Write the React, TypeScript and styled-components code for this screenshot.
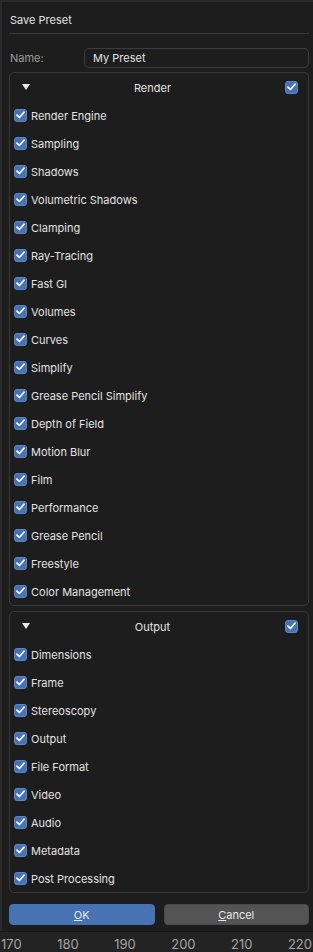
import React from "react"
import styled, { createGlobalStyle } from "styled-components"

const GlobalStyle = createGlobalStyle`
html, body {
  margin: 0;
  padding: 0;
  background: #2a2a2a;
  font-family: Inter, "Noto Sans", "DejaVu Sans", sans-serif;
  overflow: hidden;
}
`

const Page = styled.div`
display: flex;
flex-direction: column;
width: 313px;
height: 952px;
`

const Dialog = styled.div`
margin: 2px 0 0 2px;
height: 929px;
box-sizing: border-box;
background: #1d1d1d;
display: flex;
flex-direction: column;
padding: 0 4px 0 7px;
`

const Title = styled.div`
height: 32px;
box-sizing: border-box;
padding: 4px 0 0 1px;
display: flex;
align-items: center;
font-size: 11px;
color: #e2e2e2;
border-bottom: 1px solid #3a3a3a;
`

const NameRow = styled.div`
display: flex;
align-items: center;
margin-top: 14px;
height: 20px;
`

const NameLabel = styled.span`
width: 74px;
padding-left: 1px;
font-size: 11px;
color: #9c9c9c;
`

const NameInput = styled.div`
flex: 1;
height: 20px;
box-sizing: border-box;
border: 1px solid #3c3c3c;
border-radius: 5px;
background: #1d1d1d;
color: #e2e2e2;
font-size: 11px;
display: flex;
align-items: center;
padding-left: 8px;
`

const Panel = styled.div<{ $gap: number }>`
margin-top: ${(p) => p.$gap}px;
border: 1px solid #383838;
border-radius: 5px;
display: flex;
flex-direction: column;
padding: 0 4px;
`

const PanelHeader = styled.div`
height: 28px;
display: flex;
align-items: center;
`

const Triangle = styled.div`
width: 0;
height: 0;
border-left: 4px solid transparent;
border-right: 4px solid transparent;
border-top: 6px solid #e6e6e6;
margin-left: 8px;
`

const PanelTitle = styled.span`
flex: 1;
text-align: center;
font-size: 11px;
color: #e2e2e2;
margin-right: 10px;
padding-top: 2px;
`

const HeaderCheck = styled.div`
margin-right: 6px;
`

const Row = styled.div`
height: 28px;
display: flex;
align-items: center;
gap: 4px;
font-size: 11px;
color: #e2e2e2;
`

const Label = styled.span`
padding-top: 2px;
`

const Box = styled.div`
width: 13px;
height: 13px;
box-sizing: border-box;
border-radius: 3px;
background: #4772b3;
border: 1px solid #5b85c4;
display: flex;
align-items: center;
justify-content: center;
`

const Buttons = styled.div`
display: flex;
gap: 9px;
margin-top: 11px;
`

const Button = styled.div<{ $primary?: boolean }>`
flex: 1;
height: 19px;
border-radius: 4px;
background: ${(p) => (p.$primary ? "#4772b3" : "#545454")};
border: 1px solid ${(p) => (p.$primary ? "#4772b3" : "#4a4a4a")};
color: #e8e8e8;
font-size: 11px;
display: flex;
align-items: center;
justify-content: center;
`

const Ruler = styled.div`
flex: 1;
background: #232323;
border-top: 1px solid #181818;
display: flex;
align-items: center;
justify-content: space-between;
padding: 3px 1px 0 1px;
color: #a4a4a4;
font-size: 13px;
`

const Check = () => (
  <Box>
    <svg width="9" height="8" viewBox="0 0 9 8">
      <path d="M1 4.2 L3.4 6.5 L8 1.2" fill="none" stroke="#fff" strokeWidth="1.7" strokeLinecap="round" strokeLinejoin="round" />
    </svg>
  </Box>
)

const renderItems = [
  "Render Engine", "Sampling", "Shadows", "Volumetric Shadows", "Clamping",
  "Ray-Tracing", "Fast GI", "Volumes", "Curves", "Simplify",
  "Grease Pencil Simplify", "Depth of Field", "Motion Blur", "Film",
  "Performance", "Grease Pencil", "Freestyle", "Color Management",
]

const outputItems = [
  "Dimensions", "Frame", "Stereoscopy", "Output", "File Format",
  "Video", "Audio", "Metadata", "Post Processing",
]

const Section = ({ title, items, gap }: { title: string; items: string[]; gap: number }) => (
  <Panel $gap={gap}>
    <PanelHeader>
      <Triangle />
      <PanelTitle>{title}</PanelTitle>
      <HeaderCheck><Check /></HeaderCheck>
    </PanelHeader>
    {items.map((it) => (
      <Row key={it}>
        <Check />
        <Label>{it}</Label>
      </Row>
    ))}
  </Panel>
)

export default function App() {
  return (
    <>
      <GlobalStyle />
      <Page>
        <Dialog>
          <Title>Save Preset</Title>
          <NameRow>
            <NameLabel>Name:</NameLabel>
            <NameInput>My Preset</NameInput>
          </NameRow>
          <Section title="Render" items={renderItems} gap={4} />
          <Section title="Output" items={outputItems} gap={5} />
          <Buttons>
            <Button $primary><u>O</u>K</Button>
            <Button><u>C</u>ancel</Button>
          </Buttons>
        </Dialog>
        <Ruler>
          <span>170</span>
          <span>180</span>
          <span>190</span>
          <span>200</span>
          <span>210</span>
          <span>220</span>
        </Ruler>
      </Page>
    </>
  )
}
